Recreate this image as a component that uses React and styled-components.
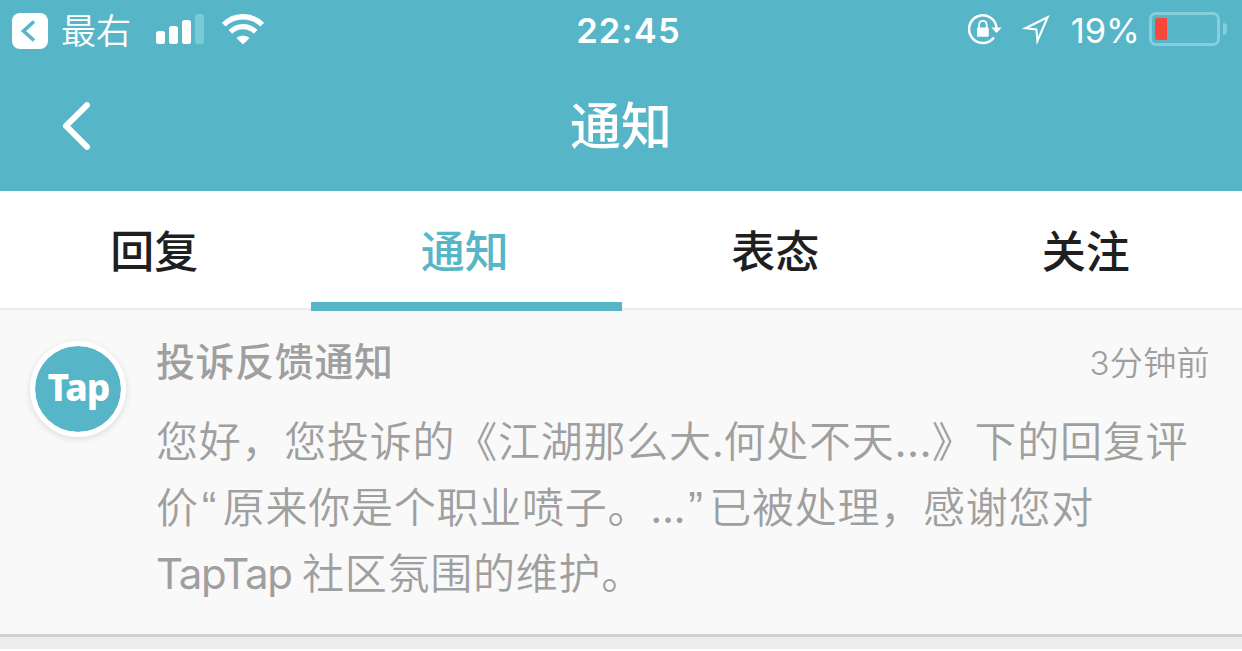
import React from 'react';
import styled, { createGlobalStyle } from 'styled-components';

const teal = '#56b5c6';

const tabs = [
  { label: '回复' },
  { label: '通知', active: true },
  { label: '表态' },
  { label: '关注' }
];

const App = () => (
  <Screen>
    <GlobalStyle />

    <Header>
      <StatusBar>
        <StatusGroup>
          <BackToApp />
          <Carrier>最右</Carrier>
          <Signal />
          <Wifi />
        </StatusGroup>
        <Clock>22:45</Clock>
        <StatusGroup $end>
          <RotationLock />
          <LocationArrow />
          <Percent>19%</Percent>
          <Battery>
            <BatteryShell>
              <BatteryLevel />
            </BatteryShell>
            <BatteryTip />
          </Battery>
        </StatusGroup>
      </StatusBar>

      <NavBar>
        <BackButton aria-label="返回">
          <svg width="32" height="52" viewBox="0 0 32 52" fill="none">
            <path d="M27 5.2 6 25.8l21 21" stroke="#fff" strokeWidth="6" strokeLinecap="round" strokeLinejoin="round" />
          </svg>
        </BackButton>
        <NavTitle>通知</NavTitle>
      </NavBar>
    </Header>

    <TabBar>
      {tabs.map((tab) => (
        <Tab key={tab.label} $active={tab.active}>{tab.label}</Tab>
      ))}
    </TabBar>

    <Notice>
      <Avatar>Tap</Avatar>
      <NoticeBody>
        <NoticeHead>
          <NoticeTitle>投诉反馈通知</NoticeTitle>
          <NoticeTime>3分钟前</NoticeTime>
        </NoticeHead>
        <Message>
          <MessageLine>
            您好，您投诉的《江湖那么大<Latin $tracking={-0.3}>.</Latin>何处不天<Latin $tracking={0.3}>...</Latin>》下的回复评
          </MessageLine>
          <MessageLine>
            价<Quote>“</Quote>原来你是个职业喷子。<Latin $tracking={-0.5}>...</Latin><Quote>”</Quote>已被处理，感谢您对
          </MessageLine>
          <MessageLine>
            <Latin $tracking={-1.3}>TapTap </Latin>社区氛围的维护。
          </MessageLine>
        </Message>
      </NoticeBody>
    </Notice>
    <Gap />
  </Screen>
);

const BackToApp = () => (
  <BackToAppSvg width="36" height="36" viewBox="0 0 36 36" fill="none">
    <rect width="36" height="36" rx="8" fill="#fff" />
    <path d="M22 8.5 11.5 18 22 27.5" stroke={teal} strokeWidth="3.6" />
  </BackToAppSvg>
);

const Signal = () => (
  <svg width="48" height="32" viewBox="0 0 48 32" fill="#fff">
    <rect y="17" width="9" height="13" rx="2.5" />
    <rect x="13" y="12" width="9" height="18" rx="2.5" />
    <rect x="26" y="6" width="9" height="24" rx="2.5" />
    <rect x="39" width="9" height="30" rx="2.5" fill="#79cbd8" />
  </svg>
);

const Wifi = () => (
  <svg width="42" height="32" viewBox="0 0 42 32" fill="none" stroke="#fff">
    <path d="M1.8 10.7a27 27 0 0 1 38.4 0" strokeWidth="5.4" />
    <path d="M8.4 17.9a17.6 17.6 0 0 1 25.2 0" strokeWidth="5.2" />
    <path d="M21 30.4l-6.6-6.3a9.6 9.6 0 0 1 13.2 0z" fill="#fff" stroke="none" />
  </svg>
);

const RotationLock = () => (
  <LockSvg width="34" height="32" viewBox="0 0 34 32" fill="none">
    <path d="M25.9 23.4A13.8 13.8 0 1 1 28.6 14" stroke="#fff" strokeWidth="2.5" />
    <path d="M23.4 13.4h10.4l-5.2 5.6z" fill="#fff" />
    <rect x="9" y="13.6" width="11.8" height="9.2" rx="1" fill="#fff" />
    <path d="M11.1 14v-3.4a3.8 3.8 0 0 1 7.6 0V14" stroke="#fff" strokeWidth="1.8" />
  </LockSvg>
);

const LocationArrow = () => (
  <svg width="32" height="32" viewBox="0 0 32 32" fill="none">
    <path d="M6.4 14.2 28.6 3.2 18.4 27 17.4 15.4z" stroke="#fff" strokeWidth="2.1" strokeMiterlimit="12" />
  </svg>
);

// --- STYLES ---

const GlobalStyle = createGlobalStyle`
  body {
    margin: 0;
    background: #fff;
    overflow: hidden;
  }
`;

const Screen = styled.div`
  width: 1242px;
  height: 651px;
  overflow: hidden;
  background: #fff;
  font-family: Inter, 'Noto Sans CJK SC', sans-serif;
`;

const Header = styled.header`
  height: 191px;
  background: ${teal};
  color: #fff;
`;

const StatusBar = styled.div`
  display: grid;
  grid-template-columns: 1fr auto 1fr;
  align-items: center;
  height: 60px;
  padding: 0 15px 0 12px;
  box-sizing: border-box;
`;

const StatusGroup = styled.div`
  display: flex;
  align-items: center;
  justify-content: ${(p) => (p.$end ? 'flex-end' : 'flex-start')};
  height: 60px;

  svg {
    flex: none;
  }
`;

const BackToAppSvg = styled.svg`
  margin-top: 2px;
`;

const LockSvg = styled.svg`
  margin-right: 17px;
`;

const Carrier = styled.span`
  margin: 0 25px 0 13px;
  padding-top: 2px;
  font-size: 35px;
  font-weight: 350;
  line-height: 58px;

  & + svg {
    margin-right: 18px;
  }
`;

const Clock = styled.span`
  padding: 1px 0 0 18px;
  font-size: 34.5px;
  font-weight: 600;
  letter-spacing: 1.2px;
  line-height: 59px;
`;

const Percent = styled.span`
  margin: 0 9px 0 20px;
  padding-top: 2px;
  font-size: 34.5px;
  font-weight: 400;
  line-height: 58px;
`;

const Battery = styled.div`
  display: flex;
  align-items: center;
  gap: 3px;
  margin-bottom: 2px;
`;

const BatteryShell = styled.div`
  width: 71px;
  height: 34px;
  box-sizing: border-box;
  padding: 3px;
  border: 3px solid #85cfdc;
  border-radius: 7px;
`;

const BatteryLevel = styled.div`
  width: 12px;
  height: 22px;
  border-radius: 2px 0 0 2px;
  background: #f9483a;
`;

const BatteryTip = styled.div`
  width: 4px;
  height: 12px;
  border-radius: 0 4px 4px 0;
  background: #85cfdc;
`;

const NavBar = styled.div`
  display: grid;
  grid-template-columns: 1fr auto 1fr;
  align-items: center;
  height: 131px;
`;

const BackButton = styled.button`
  display: flex;
  width: 32px;
  margin: 0 0 2px 60px;
  padding: 0;
  border: 0;
  background: none;
`;

const NavTitle = styled.h1`
  margin: 0;
  font-size: 51px;
  font-weight: 500;
  line-height: 133px;
`;

const TabBar = styled.nav`
  display: grid;
  grid-template-columns: repeat(4, 1fr);
  height: 120px;
  background: linear-gradient(#fff 117px, #e9e9e9 117px, #f3f3f3 120px);
`;

const Tab = styled.div`
  height: 120px;
  margin-right: -1px;
  box-shadow: ${(p) => (p.$active ? `inset 0 -9px ${teal}` : 'none')};
  color: ${(p) => (p.$active ? teal : '#1f1f1f')};
  font-size: 44px;
  font-weight: 500;
  line-height: 122px;
  text-align: center;
  text-indent: -3px;
`;

const Notice = styled.article`
  display: flex;
  height: 323px;
  padding: 30px 32px 0 30px;
  box-sizing: border-box;
  background: #f9f9f9;
  color: #9f9f9f;
`;

const Avatar = styled.div`
  flex: none;
  width: 96px;
  height: 96px;
  box-sizing: border-box;
  border: 5px solid #fff;
  border-radius: 50%;
  background: ${teal};
  background-clip: padding-box;
  box-shadow: 0 2px 7px rgba(0, 0, 0, 0.12);
  color: #fff;
  font-family: 'Noto Sans', 'Open Sans', sans-serif;
  font-size: 37px;
  font-weight: 800;
  letter-spacing: -1px;
  line-height: 82px;
  text-align: center;
  text-indent: 1px;
`;

const NoticeBody = styled.div`
  flex: 1;
  min-width: 0;
  margin-left: 30px;
`;

const NoticeHead = styled.div`
  display: flex;
  justify-content: space-between;
  height: 42px;
  line-height: 42px;
`;

const NoticeTitle = styled.h2`
  margin: 0;
  font-size: 39px;
  font-weight: 500;
  letter-spacing: 0.6px;
  line-height: 42px;
`;

const NoticeTime = styled.span`
  font-size: 33px;
  font-weight: 350;
  letter-spacing: 0.4px;
  line-height: 44px;
`;

const Message = styled.p`
  margin: 26px 0 0;
  font-size: 42px;
  font-weight: 350;
  line-height: 66px;
`;

const MessageLine = styled.span`
  display: block;
  letter-spacing: 0.75px;
  white-space: nowrap;
`;

const Latin = styled.span`
  font-weight: 400;
  letter-spacing: ${(p) => p.$tracking}px;
`;

const Quote = styled.span`
  margin-left: 3px;
  font-family: 'Liberation Sans', sans-serif;
  font-size: 44px;
  letter-spacing: 6.4px;
  line-height: 1;
`;

const Gap = styled.div`
  height: 15px;
  box-sizing: border-box;
  border-top: 3px solid #d1d1d1;
  background: #ededed;
`;

export default App;
